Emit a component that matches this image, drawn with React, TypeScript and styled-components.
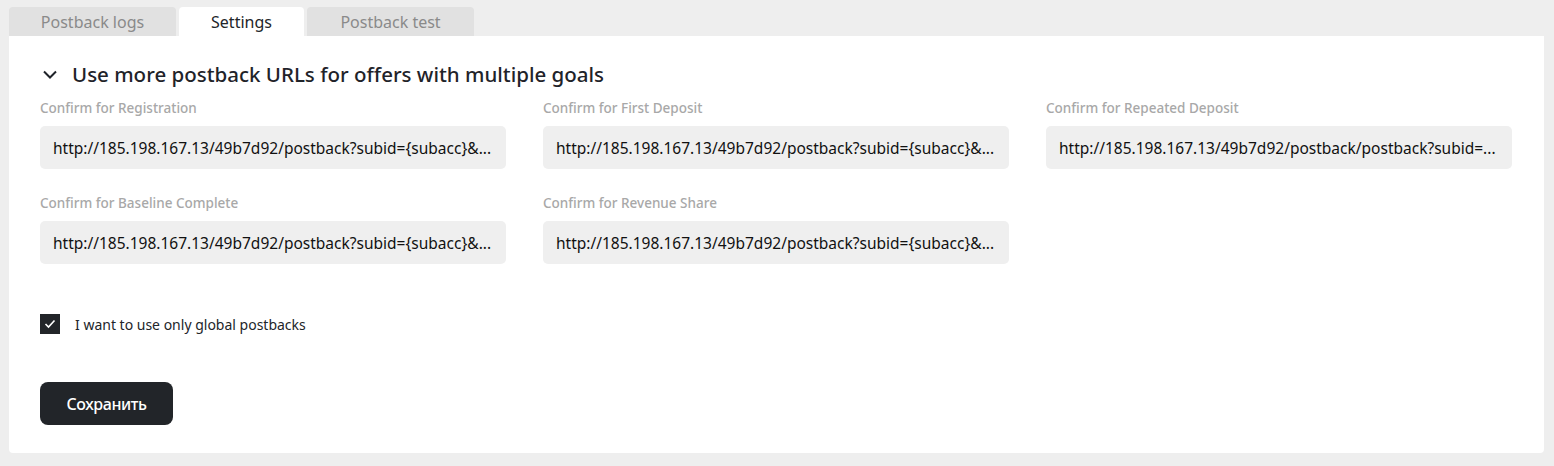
import React, { useState } from "react";
import styled, { createGlobalStyle } from "styled-components";

const GlobalStyle = createGlobalStyle`
  html, body { margin: 0; padding: 0; background: #eeeeee; }
  body { font-family: "Noto Sans", "DejaVu Sans", sans-serif; }
  * { box-sizing: border-box; }
`;

const Page = styled.div`
  padding: 7px 10px 13px 9px;
`;

const Tabs = styled.div`
  display: flex;
  gap: 3px;
  height: 29px;
`;

const Tab = styled.button<{ $active?: boolean; $w: number }>`
  width: ${(p) => p.$w}px;
  height: 29px;
  border: 0;
  border-radius: 4px 4px 0 0;
  background: ${(p) => (p.$active ? "#ffffff" : "#e1e1e1")};
  color: ${(p) => (p.$active ? "#222529" : "#8a8a8a")};
  font-family: "Noto Sans", sans-serif;
  font-size: 16px;
  padding: 0;
  cursor: pointer;
`;

const Panel = styled.div`
  background: #ffffff;
  border-radius: 0 0 4px 4px;
  padding: 24px 33px 28px 31px;
`;

const TitleRow = styled.div`
  display: flex;
  align-items: center;
  gap: 15px;
  height: 28px;
  padding-left: 3px;
  color: #1f2329;
  font-size: 20.5px;
  font-weight: 500;
`;

const Chevron = styled.svg`
  width: 14px;
  height: 9px;
  flex: none;
`;

const Grid = styled.div`
  display: grid;
  grid-template-columns: repeat(3, 466px);
  column-gap: 37px;
  row-gap: 25px;
  margin-top: 11px;
`;

const Field = styled.div`
  display: flex;
  flex-direction: column;
  gap: 9px;
`;

const Label = styled.div`
  font-size: 13.5px;
  line-height: 18px;
  font-weight: 500;
  color: #a8a8a8;
`;

const Input = styled.div`
  height: 43px;
  border-radius: 5px;
  background: #efefef;
  padding: 0 13px;
  display: flex;
  align-items: center;
  font-size: 15.5px;
  color: #111111;
  white-space: nowrap;
  overflow: hidden;
`;

const CheckRow = styled.label`
  display: flex;
  align-items: center;
  gap: 15px;
  margin-top: 50px;
  font-size: 14px;
  color: #222529;
  cursor: pointer;
`;

const Box = styled.span`
  width: 20px;
  height: 20px;
  background: #222529;
  display: flex;
  align-items: center;
  justify-content: center;
  flex: none;
`;

const SaveButton = styled.button`
  margin-top: 48px;
  width: 133px;
  height: 43px;
  border: 0;
  border-radius: 8px;
  background: #222529;
  color: #ffffff;
  font-family: "Noto Sans", sans-serif;
  font-size: 16px;
  font-weight: 500;
  letter-spacing: -0.4px;
  cursor: pointer;
`;

const URL1 = "http://185.198.167.13/49b7d92/postback?subid={subacc}&...";
const URL2 = "http://185.198.167.13/49b7d92/postback/postback?subid=...";

const fields = [
  { label: "Confirm for Registration", value: URL1 },
  { label: "Confirm for First Deposit", value: URL1 },
  { label: "Confirm for Repeated Deposit", value: URL2 },
  { label: "Confirm for Baseline Complete", value: URL1 },
  { label: "Confirm for Revenue Share", value: URL1 },
];

export default function App() {
  const [tab, setTab] = useState(1);
  const tabs = [
    { name: "Postback logs", w: 167 },
    { name: "Settings", w: 125 },
    { name: "Postback test", w: 167 },
  ];
  return (
    <>
      <GlobalStyle />
      <Page>
        <Tabs>
          {tabs.map((t, i) => (
            <Tab key={t.name} $w={t.w} $active={i === tab} onClick={() => setTab(i)}>
              {t.name}
            </Tab>
          ))}
        </Tabs>
        <Panel>
          <TitleRow>
            <Chevron viewBox="0 0 14 9">
              <path d="M1 1.5 L7 7.5 L13 1.5" fill="none" stroke="#1f2329" strokeWidth="2" />
            </Chevron>
            Use more postback URLs for offers with multiple goals
          </TitleRow>
          <Grid>
            {fields.map((f) => (
              <Field key={f.label}>
                <Label>{f.label}</Label>
                <Input>{f.value}</Input>
              </Field>
            ))}
          </Grid>
          <CheckRow>
            <Box>
              <svg width="12" height="10" viewBox="0 0 12 10">
                <path d="M1.5 5 L4.5 8 L10.5 1.5" fill="none" stroke="#ffffff" strokeWidth="1.6" />
              </svg>
            </Box>
            I want to use only global postbacks
          </CheckRow>
          <SaveButton>Сохранить</SaveButton>
        </Panel>
      </Page>
    </>
  );
}
